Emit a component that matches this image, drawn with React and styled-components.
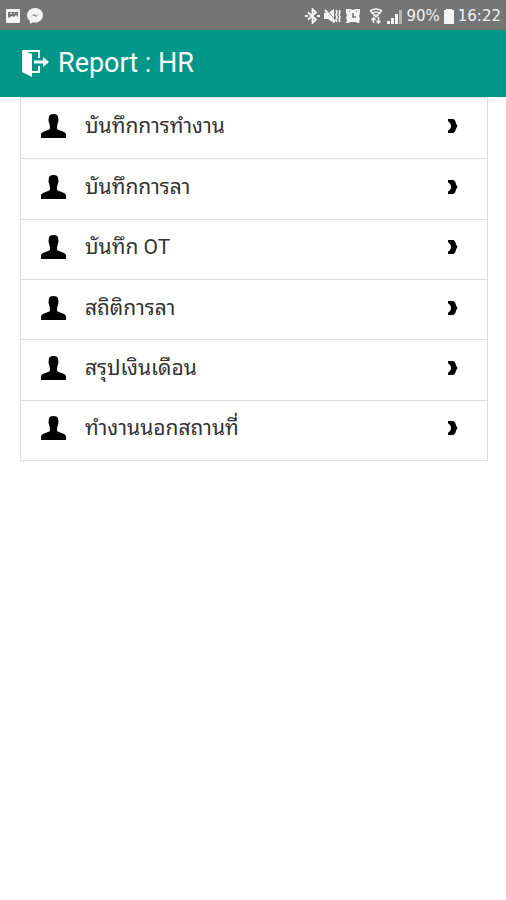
import React from 'react'
import styled, { createGlobalStyle } from 'styled-components'

const GlobalStyle = createGlobalStyle`
  * { box-sizing: border-box; }
  body {
    margin: 0;
    background-color: #ffffff;
    font-family: Roboto, 'Noto Sans Thai Looped', Loma, Garuda, 'Noto Sans Thai', 'Noto Sans', sans-serif;
  }
`
const StatusBar = styled.div`
  display: flex;
  justify-content: space-between;
  align-items: center;
  height: 30px;
  padding: 2px 5px 0;
  color: #f4f4f4;
  background-color: #757575;
`
const StatusGroup = styled.div`
  display: flex;
  align-items: center;
  gap: ${props => props.$gap || '4px'};
`
const StatusText = styled.span`
  font-family: 'DejaVu Sans', sans-serif;
  font-size: 15px;
  line-height: 20px;
`
const Header = styled.header`
  display: flex;
  align-items: center;
  gap: 8px;
  height: 67px;
  padding: 0 20px 2px;
  color: #ffffff;
  background-color: #009688;
`
const BackButton = styled.button`
  display: flex;
  padding: 0;
  border: 0;
  color: inherit;
  background: none;
  cursor: pointer;
`
const Title = styled.h1`
  margin: 0;
  font-size: 27px;
  font-weight: 400;
  line-height: 32px;
`
const Menu = styled.ul`
  display: grid;
  grid-auto-rows: 1fr;
  min-height: 364px;
  margin: 0 18px 0 20px;
  padding: 0;
  border: 1px solid #dddddd;
  list-style: none;
`
const MenuItem = styled.li`
  display: flex;

  & + & { border-top: 1px solid #dddddd; }
`
const MenuLink = styled.a`
  display: flex;
  flex: 1;
  align-items: center;
  padding: 0 29px 4px 20px;
  color: #333333;
  text-decoration: none;
`
const MenuLabel = styled.span`
  flex: 1;
  margin-left: 19px;
  font-size: 21px;
  line-height: 28px;
`

const ImageIcon = () => (
  <svg width='16' height='16' viewBox='0 0 16 16' aria-hidden='true'>
    <rect x='1' y='1' width='14' height='14' rx='1' fill='currentColor' />
    <path d='M3 10V4h10v5l-2-2-2 2-2-1-2 1z' fill='#757575' />
    <path d='M5 5h2v1H5zM8 6l2-1v1z' fill='currentColor' />
  </svg>
)

const MessengerIcon = () => (
  <svg width='16' height='16' viewBox='0 0 16 16' aria-hidden='true'>
    <path d='M8 0C3.6 0 0 3.2 0 7.2c0 2.3 1.1 4.3 2.9 5.6V16l2.7-1.8c.8.2 1.6.3 2.4.3 4.4 0 8-3.2 8-7.3S12.400 0 8 0z' fill='currentColor' />
    <path d='M4 9 7 6l2.200 1.800L12 6 9 9 6.800 7.200z' fill='#757575' />
  </svg>
)

const BluetoothIcon = () => (
  <svg width='15' height='16' viewBox='0 0 15 16' fill='none' stroke='currentColor' strokeWidth='1.8' aria-hidden='true'>
    <path d='m3 4.5 8 7L7.5 15V1L11 4.5l-8 7M0 8h3M12 8h3' />
  </svg>
)

const MuteIcon = () => (
  <svg width='17' height='16' viewBox='0 0 17 16' aria-hidden='true'>
    <path d='M0 5h4l6-4v14l-6-4H0z' fill='currentColor' />
    <path d='m2 1 10 12' stroke='#757575' />
    <path d='m1 2 10 12' stroke='currentColor' strokeWidth='2' />
    <path d='M12 2l1 2-1 3 1 2-1 3 1 2M15 2l1 2-1 3 1 2-1 3 1 2' fill='none' stroke='currentColor' strokeWidth='1.6' />
  </svg>
)

const AlarmIcon = () => (
  <svg width='16' height='16' viewBox='0 0 16 16' aria-hidden='true'>
    <path d='M1 1h4l3 1 3-1h4v4l-1 3 1 3-1 3 1 1h-3l-1-1H5l-1 1H1l1-3-1-2 1-3-1-2z' fill='currentColor' />
    <path d='M8 5v4h3' fill='none' stroke='#757575' strokeWidth='1.6' />
    <path d='M4 4l1-1M12 4l-1-1' stroke='#757575' />
  </svg>
)

const WifiIcon = () => (
  <svg width='14' height='16' viewBox='0 0 14 16' fill='none' stroke='currentColor' strokeWidth='1.6' aria-hidden='true'>
    <path d='M1 3q6-4 12 0M2.500 5.500q4.500-3 9 0M4.500 8q2.500-2 5 0' />
    <path d='M1.500 3 7 9l5.500-6' strokeWidth='1.200' />
    <path d='M4.500 9v6M2.500 12l2-2 2 2M9.500 9v6M7.500 13l2 2 2-2' />
  </svg>
)

const SignalIcon = () => (
  <svg width='15' height='15' viewBox='0 0 15 15' fill='currentColor' aria-hidden='true'>
    <path d='M0 12h3v3H0zM4 9h3v6H4zM8 5h3v10H8z' />
    <path d='M12 1h3v14h-3z' opacity='0.500' />
  </svg>
)

const BatteryIcon = () => (
  <svg width='10' height='15' viewBox='0 0 10 15' fill='currentColor' aria-hidden='true'>
    <path d='M2 0h6v1h2v14H0V1h2z' />
  </svg>
)

const ExitIcon = () => (
  <svg width='30' height='28' viewBox='0 0 30 28' aria-hidden='true'>
    <path d='M2 1l10 4v23L2 23z' fill='currentColor' />
    <path d='M3 2h16v7M19 17v6h-7' fill='none' stroke='currentColor' strokeWidth='2' />
    <path d='M14 11.500h9V8l6 5-6 5v-3.500h-9z' fill='currentColor' />
  </svg>
)

const UserIcon = () => (
  <svg width='25' height='24' viewBox='0 0 26 24' preserveAspectRatio='none' aria-hidden='true'>
    <path d='M13 0C9.500 0 8 1.400 8 4.500c0 1-.3 1.500-.1 2.500.1 1 .5 1.300.7 2 .2 1.500.5 2.300.7 3.200v2.600c-.8 1-2.800 1.400-4.800 2.200C1.800 18.100 0 18.800 0 20.500V24h26v-3.500c0-1.700-1.800-2.400-4.500-3.500-2-.8-4-1.200-4.800-2.200v-2.600c.2-.9.500-1.700.7-3.200.2-.7.6-1 .7-2 .2-1-.1-1.500-.1-2.500C18 1.400 16.500 0 13 0z' />
  </svg>
)

const ArrowIcon = () => (
  <svg width='11' height='14' viewBox='0 0 11 14' aria-hidden='true'>
    <path d='M1 0h4.500C8 0 8.500 2.500 9.300 5L10.500 7 9.300 9C8.500 11.500 8 14 5.500 14H1v-2.300C2.800 10.700 4 9 4 7S2.800 3.300 1 2.300z' />
  </svg>
)

const items = [
  'บันทึกการทำงาน',
  'บันทึกการลา',
  'บันทึก OT',
  'สถิติการลา',
  'สรุปเงินเดือน',
  'ทำงานนอกสถานที่'
]

const App = () => (
  <React.Fragment>
    <GlobalStyle />
    <StatusBar>
      <StatusGroup $gap='6px'>
        <ImageIcon />
        <MessengerIcon />
      </StatusGroup>
      <StatusGroup $gap='8px'>
        <StatusGroup>
          <BluetoothIcon />
          <MuteIcon />
          <AlarmIcon />
        </StatusGroup>
        <StatusGroup>
          <WifiIcon />
          <SignalIcon />
          <StatusText>90%</StatusText>
          <BatteryIcon />
          <StatusText>16:22</StatusText>
        </StatusGroup>
      </StatusGroup>
    </StatusBar>
    <Header>
      <BackButton type='button' aria-label='Exit'>
        <ExitIcon />
      </BackButton>
      <Title>Report : HR</Title>
    </Header>
    <nav>
      <Menu>
        {items.map(item => (
          <MenuItem key={item}>
            <MenuLink href='#'>
              <UserIcon />
              <MenuLabel>{item}</MenuLabel>
              <ArrowIcon />
            </MenuLink>
          </MenuItem>
        ))}
      </Menu>
    </nav>
  </React.Fragment>
)

export default App
